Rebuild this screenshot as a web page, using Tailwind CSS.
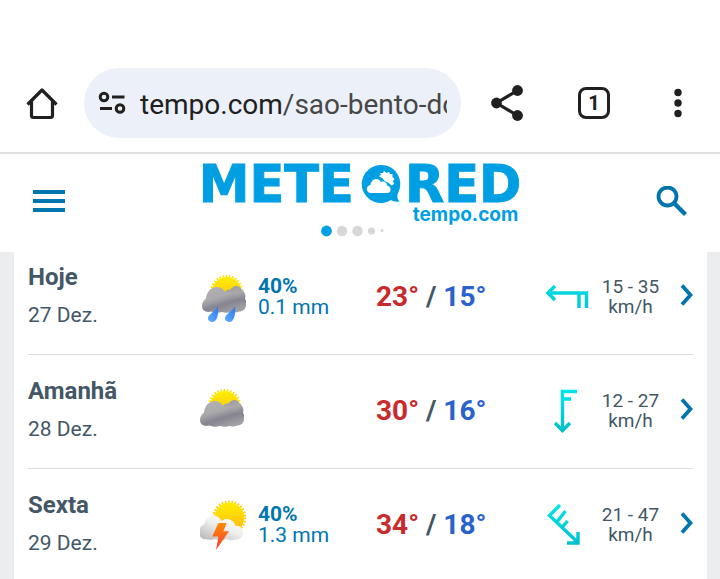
<!DOCTYPE html>
<html lang="pt">
<head>
    <meta charset="UTF-8">
    <meta name="viewport" content="width=device-width, initial-scale=1.0">
    <title>METEORED tempo.com</title>
    <script src="https://cdn.jsdelivr.net/npm/@tailwindcss/browser@4"></script>
</head>
<body class="bg-[#ecedef] font-['Roboto',sans-serif] text-[#435766] h-screen overflow-hidden">

    <!-- Shared shapes -->
    <svg class="absolute w-0 h-0" aria-hidden="true">
        <defs>
            <linearGradient id="sun" x1="0" y1="0" x2="0" y2="1"><stop offset="0" stop-color="#ffee00"/><stop offset="1" stop-color="#fdb813"/></linearGradient>
            <linearGradient id="grey" gradientUnits="userSpaceOnUse" x1="20" y1="15" x2="28" y2="41"><stop offset="0" stop-color="#b0b0b0"/><stop offset=".35" stop-color="#aaaaac"/><stop offset=".65" stop-color="#858490"/><stop offset="1" stop-color="#a0a0a4"/></linearGradient>
            <linearGradient id="back" x1="0" y1="0" x2=".4" y2="1"><stop offset="0" stop-color="#9a9a9e"/><stop offset=".5" stop-color="#a9a9ab"/><stop offset="1" stop-color="#777785"/></linearGradient>
            <linearGradient id="white" x1="1" y1="0" x2=".2" y2="1"><stop offset="0" stop-color="#ffffff"/><stop offset=".5" stop-color="#f0f0f0"/><stop offset="1" stop-color="#bcbcbc"/></linearGradient>
            <linearGradient id="drop" x1="1" y1="0" x2="0" y2="1"><stop offset="0" stop-color="#2a78e8"/><stop offset="1" stop-color="#62b0ff"/></linearGradient>
            <linearGradient id="bolt" x1="0" y1="0" x2="0" y2="1"><stop offset="0" stop-color="#ff8a00"/><stop offset="1" stop-color="#fb3a35"/></linearGradient>
            <linearGradient id="wind" gradientUnits="userSpaceOnUse" x1="0" y1="0" x2="0" y2="44"><stop offset="0" stop-color="#00e8ee"/><stop offset="1" stop-color="#00bccb"/></linearGradient>
        </defs>
        <symbol id="cloudy" viewBox="0 0 50 50">
            <circle cx="26.7" cy="19.5" r="14.5" fill="url(#sun)"/>
            <circle cx="26.7" cy="19.5" r="15.5" fill="none" stroke="#fde000" stroke-width="2" stroke-dasharray="1.6 1.65"/>
            <path d="M24 22C25 18 28 17 30.500 17.500C33 13 40 12.500 42 18C45 20 46 24 45 27C47 30 46 33 43 34L24 30Z" fill="url(#back)"/>
            <path d="M6 26.500C6.500 20 11 15 17 15C21 15 23.500 17 25 20C31 18 36 22 36.500 26.500C41 25.500 46 28 46 33C46 37 43 39.500 39 39.500C36 41 33 40.500 31.500 40C28 41.500 24 40.500 22 40C18 41.500 13 40.500 11.500 39.500C6 41 2 38.500 2 34C2 30.500 3.500 28.500 6 26.500Z" fill="url(#grey)"/>
        </symbol>
        <symbol id="rain" viewBox="0 0 50 50">
            <use href="#cloudy" width="50" height="50"/>
            <path d="M18 34.500C18.500 40 18 50 12.500 50C8 50 6.500 46 9.500 43C12 40.500 15 38.500 18 34.500Z" fill="url(#drop)"/>
            <path d="M35 34.500C35.500 40 35 50 29.500 50C25 50 23.500 46 26.500 43C29 40.500 32 38.500 35 34.500Z" fill="url(#drop)"/>
        </symbol>
        <symbol id="storm" viewBox="0 0 50 52">
            <circle cx="31.300" cy="18.500" r="15" fill="url(#sun)"/>
            <circle cx="31.300" cy="18.500" r="16" fill="none" stroke="#fdce00" stroke-width="2" stroke-dasharray="1.700 1.650"/>
            <path d="M6.500 25C7.500 19 11.500 16 16 16.500C20 17 22.500 19.500 23.500 22C29 17.500 36 21 37.500 27C41 25.500 45 29 45 34C45 38 42 40.500 38 40.500C34 42 30 41 28 40C24 42 19 41 17 40C13 41.500 10 41 8.500 40C4 41 1 37.500 1 33.500C1 29.500 3 26.500 6.500 25Z" fill="url(#white)"/>
            <path d="M20.300 24H28.700L25.300 32.300H31L18 51L20.500 37.500H14.300Z" fill="url(#bolt)"/>
        </symbol>
        <symbol id="chevron" viewBox="0 0 13 22">
            <path d="M2 1.500L10.500 11L2 20.500" fill="none" stroke="#0075b0" stroke-width="3.800"/>
        </symbol>
    </svg>

    <!-- Browser toolbar -->
    <div class="bg-white border-b-2 border-[#e0e0e0] pt-[68px] pb-[14px] px-6 flex items-center">
        <button aria-label="Início" class="shrink-0">
            <svg class="w-9 h-9" viewBox="0 0 36 36" fill="none" stroke="#202020" stroke-width="3.200">
                <path d="M3.500 19.500L18 5L32.500 19.500M7.500 16V30.500Q7.500 32.500 9.500 32.500H26.500Q28.500 32.500 28.500 30.500V16" stroke-linejoin="round"/>
            </svg>
        </button>
        <div class="grow h-[70px] ml-6 bg-[#ecf0f9] rounded-full flex items-center px-[14px]">
            <svg class="w-7 h-7 shrink-0" viewBox="0 0 28 28" fill="none" stroke="#202020" stroke-width="3">
                <circle cx="6" cy="8" r="3.800"/><path d="M14 8H26.500M2 19.500H14"/><circle cx="22" cy="19.500" r="3.800"/>
            </svg>
            <div class="ml-[14px] pt-[3px] w-0 grow overflow-hidden whitespace-nowrap text-[28px] text-[#474747]"><span class="text-[#202020]">tempo.com</span>/sao-bento-do</div>
        </div>
        <button aria-label="Compartilhar" class="ml-7 shrink-0">
            <svg class="w-9 h-9" viewBox="0 0 36 36" fill="#202020">
                <path d="M28.500 5.500L7.500 18L28.500 30.500" fill="none" stroke="#202020" stroke-width="3.200"/>
                <circle cx="28.500" cy="5.500" r="5.400"/><circle cx="7.500" cy="18" r="5.400"/><circle cx="28.500" cy="30.500" r="5.400"/>
            </svg>
        </button>
        <button aria-label="Guias" class="ml-[53px] w-8 h-8 shrink-0 border-3 border-[#202020] rounded-lg text-xl leading-5 font-bold text-[#202020]">1</button>
        <button aria-label="Mais opções" class="ml-[58px] mr-2 w-5 shrink-0 flex justify-center">
            <svg class="w-2 h-8" viewBox="0 0 8 32" fill="#202020"><circle cx="4" cy="5.500" r="3.700"/><circle cx="4" cy="16" r="3.700"/><circle cx="4" cy="26.500" r="3.700"/></svg>
        </button>
    </div>

    <!-- Site header -->
    <header class="relative z-10 bg-white h-[98px] px-[33px] flex justify-between">
        <button aria-label="Menu" class="self-start mt-9">
            <svg class="w-8 h-[22px]" viewBox="0 0 32 22" fill="#0075b0"><path d="M0 0H32V4H0ZM0 9H32V13H0ZM0 18H32V22H0Z"/></svg>
        </button>
        <a href="#" class="pt-[11px] text-[#009fe3]">
            <div class="flex leading-10 text-[51px] font-bold font-['DejaVu_Sans',sans-serif] [-webkit-text-stroke:1px_#009fe3]">
                <span>METE</span>
                <svg class="w-10 h-10 ml-[7px] mr-1" viewBox="0 -1 40 40">
                    <path d="M20 -1A19 19 0 0 1 37 27C36 30 36 33 38.500 35.500C35 36 32 35.500 30 34A19 19 0 1 1 20 -1Z" fill="#009fe3"/>
                    <path d="M18 10L20 9L19 7L22 7L23 5L25.500 7L28 6L29 8L31.500 8L31.500 11L33.500 13L32 15L33 18L30.500 19.500C27 15.500 24 16.500 22 13C21 11.500 19 11.500 18 10Z" fill="#fff"/>
                    <path d="M10 27C4.500 27 4.500 19.500 9.500 19C10 12.500 17.500 11 20 16C23.500 14.500 26 17 26 19.500C31 20 30.500 27 26.500 27Z" fill="#fff"/>
                </svg>
                <span>RED</span>
            </div>
            <div class="pr-[3px] text-right text-[19px] leading-[19px] font-bold font-['Inter',sans-serif]">tempo.com</div>
            <svg class="w-20 h-3 mx-auto mt-px" viewBox="0 0 80 12" fill="#d7d7d7">
                <circle cx="6.500" cy="6" r="5.400" fill="#009fe3"/><circle cx="22" cy="6" r="5.200"/><circle cx="37.500" cy="6" r="5.200"/><circle cx="51.500" cy="6" r="3.600"/><circle cx="62" cy="5.500" r="1.500"/>
            </svg>
        </a>
        <button aria-label="Buscar" class="self-start mt-8">
            <svg class="w-8 h-8" viewBox="0 0 32 32" fill="none" stroke="#0075b0"><circle cx="12.500" cy="10.500" r="9" stroke-width="3.800"/><path d="M19 17L30.500 28.500" stroke-width="4.400"/></svg>
        </button>
    </header>

    <!-- Forecast, first row tucked under the header -->
    <main class="-mt-[11px] ml-[14px] mr-[13px] px-[14px] bg-white">
        <ul>
            <li class="border-b border-[#dcdcdc]">
                <a href="#" class="grid grid-cols-[172fr_58px_118fr_169fr_44px_83px_21px] items-center pt-[17px] pb-[19px]">
                    <div>
                        <h2 class="text-2xl leading-[38px] font-bold">Hoje</h2>
                        <p class="text-[21px] leading-[39px]">27 Dez.</p>
                    </div>
                    <svg class="w-[50px] h-[50px]"><use href="#rain"/></svg>
                    <div class="text-[21px] leading-[21px] text-[#0075b0]">
                        <p class="font-bold">40%</p>
                        <p>0.1 mm</p>
                    </div>
                    <p class="text-[28px] font-bold"><span class="text-[#c92a2c]">23°</span> / <span class="text-[#2962cc]">15°</span></p>
                    <svg class="w-11 h-11" viewBox="0 0 44 44" fill="none" stroke="url(#wind)" stroke-width="3.400">
                        <path d="M10 11L3 18L10 25M3 18.010L41.500 18V33M34 18V33"/>
                    </svg>
                    <p class="text-[19px] leading-5 text-center">15 - 35<br>km/h</p>
                    <svg class="w-[13px] h-[22px] ml-auto mb-1"><use href="#chevron"/></svg>
                </a>
            </li>
            <li class="border-b border-[#dcdcdc]">
                <a href="#" class="grid grid-cols-[172fr_58px_118fr_169fr_44px_83px_21px] items-center pt-[17px] pb-[19px]">
                    <div>
                        <h2 class="text-2xl leading-[38px] font-bold">Amanhã</h2>
                        <p class="text-[21px] leading-[39px]">28 Dez.</p>
                    </div>
                    <svg class="w-[50px] h-[50px]" viewBox="2 0 50 50"><use href="#cloudy" width="50" height="50"/></svg>
                    <div></div>
                    <p class="text-[28px] font-bold"><span class="text-[#c92a2c]">30°</span> / <span class="text-[#2962cc]">16°</span></p>
                    <svg class="w-11 h-11" viewBox="0 0 44 44" fill="none" stroke="url(#wind)" stroke-width="3.400">
                        <path d="M32 2.500H17.500V41M17.500 10H26M10 34L17.500 41.500L25 34"/>
                    </svg>
                    <p class="text-[19px] leading-5 text-center">12 - 27<br>km/h</p>
                    <svg class="w-[13px] h-[22px] ml-auto mb-1"><use href="#chevron"/></svg>
                </a>
            </li>
            <li class="border-b border-[#dcdcdc]">
                <a href="#" class="grid grid-cols-[172fr_58px_118fr_169fr_44px_83px_21px] items-center pt-[17px] pb-[19px]">
                    <div>
                        <h2 class="text-2xl leading-[38px] font-bold">Sexta</h2>
                        <p class="text-[21px] leading-[39px]">29 Dez.</p>
                    </div>
                    <svg class="w-[50px] h-[52px]" viewBox="2 0 50 52"><use href="#storm" width="50" height="52"/></svg>
                    <div class="text-[21px] leading-[21px] text-[#0075b0]">
                        <p class="font-bold">40%</p>
                        <p>1.3 mm</p>
                    </div>
                    <p class="text-[28px] font-bold"><span class="text-[#c92a2c]">34°</span> / <span class="text-[#2962cc]">18°</span></p>
                    <svg class="w-11 h-11" viewBox="0 0 44 44" fill="none" stroke="url(#wind)" stroke-width="3.400">
                        <path d="M15 2L4.500 12.500L33 39.500M11.500 19.500L20.500 8M17 24.500L22.500 18M33 29V40H22"/>
                    </svg>
                    <p class="text-[19px] leading-5 text-center">21 - 47<br>km/h</p>
                    <svg class="w-[13px] h-[22px] ml-auto mb-1"><use href="#chevron"/></svg>
                </a>
            </li>
        </ul>
    </main>

</body>
</html>
